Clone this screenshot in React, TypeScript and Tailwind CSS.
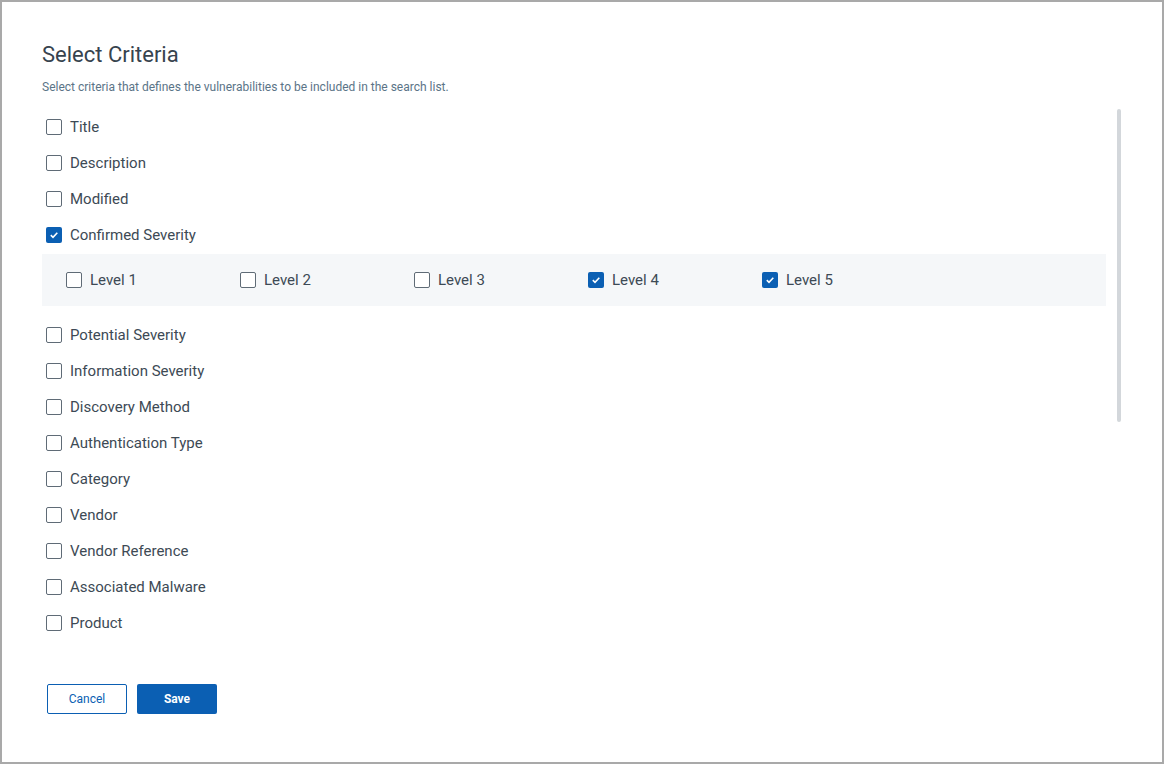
import React from "react";

const items = ["Title", "Description", "Modified", "Confirmed Severity"];
const rest = [
  "Potential Severity",
  "Information Severity",
  "Discovery Method",
  "Authentication Type",
  "Category",
  "Vendor",
  "Vendor Reference",
  "Associated Malware",
  "Product",
  "Exploitability",
];
const levels = [
  { label: "Level 1", on: false },
  { label: "Level 2", on: false },
  { label: "Level 3", on: false },
  { label: "Level 4", on: true },
  { label: "Level 5", on: true },
];

function Box({ on }: { on: boolean }) {
  return on ? (
    <span className="w-4 h-4 rounded-[2px] bg-[#0b5fb3] flex items-center justify-center shrink-0">
      <svg width="10" height="10" viewBox="0 0 10 10">
        <path d="M1.8 5.2 L4 7.3 L8.3 2.8" fill="none" stroke="white" strokeWidth="1.6" />
      </svg>
    </span>
  ) : (
    <span className="w-4 h-4 rounded-[2px] border border-[#5f6b76] bg-white shrink-0" />
  );
}

function Row({ label, on = false }: { label: string; on?: boolean }) {
  return (
    <div className="h-9 flex items-center gap-2 pl-1">
      <Box on={on} />
      <span className="text-[15px] text-[#3d4a55]">{label}</span>
    </div>
  );
}

export default function App() {
  return (
    <div
      className="w-[1164px] h-[764px] border-2 border-[#a9a9a9] bg-white flex flex-col overflow-hidden"
      style={{ fontFamily: "Roboto, 'Liberation Sans', sans-serif" }}
    >
      <div className="pl-10 pr-[41px] pt-[38px] flex flex-col">
        <h1 className="text-[22px] leading-[30px] text-[#37434e]">Select Criteria</h1>
        <p className="mt-[9px] text-[12px] leading-[16px] text-[#5b7487]">
          Select criteria that defines the vulnerabilities to be included in the search list.
        </p>
        <div className="relative mt-[14px] h-[541px] overflow-hidden">
          <div className="pr-[15px]">
            {items.map((l) => (
              <Row key={l} label={l} on={l === "Confirmed Severity"} />
            ))}
            <div className="mt-px mb-[11px] h-[52px] bg-[#f5f7f9] flex items-center pl-6">
              {levels.map((lv) => (
                <div key={lv.label} className="w-[174px] flex items-center gap-2">
                  <Box on={lv.on} />
                  <span className="text-[15px] text-[#3d4a55]">{lv.label}</span>
                </div>
              ))}
            </div>
            {rest.map((l) => (
              <Row key={l} label={l} />
            ))}
          </div>
          <div className="absolute right-0 top-0 w-[4px] h-[313px] rounded bg-[#d3d7db]" />
        </div>
        <div className="mt-[34px] flex gap-[10px] pl-[5px]">
          <button className="w-20 h-[30px] border border-[#0b5fb3] rounded-[2px] text-[12px] text-[#0b5fb3] bg-white">
            Cancel
          </button>
          <button className="w-20 h-[30px] rounded-[2px] text-[12px] font-bold text-white bg-[#0b5fb3]">
            Save
          </button>
        </div>
      </div>
    </div>
  );
}
